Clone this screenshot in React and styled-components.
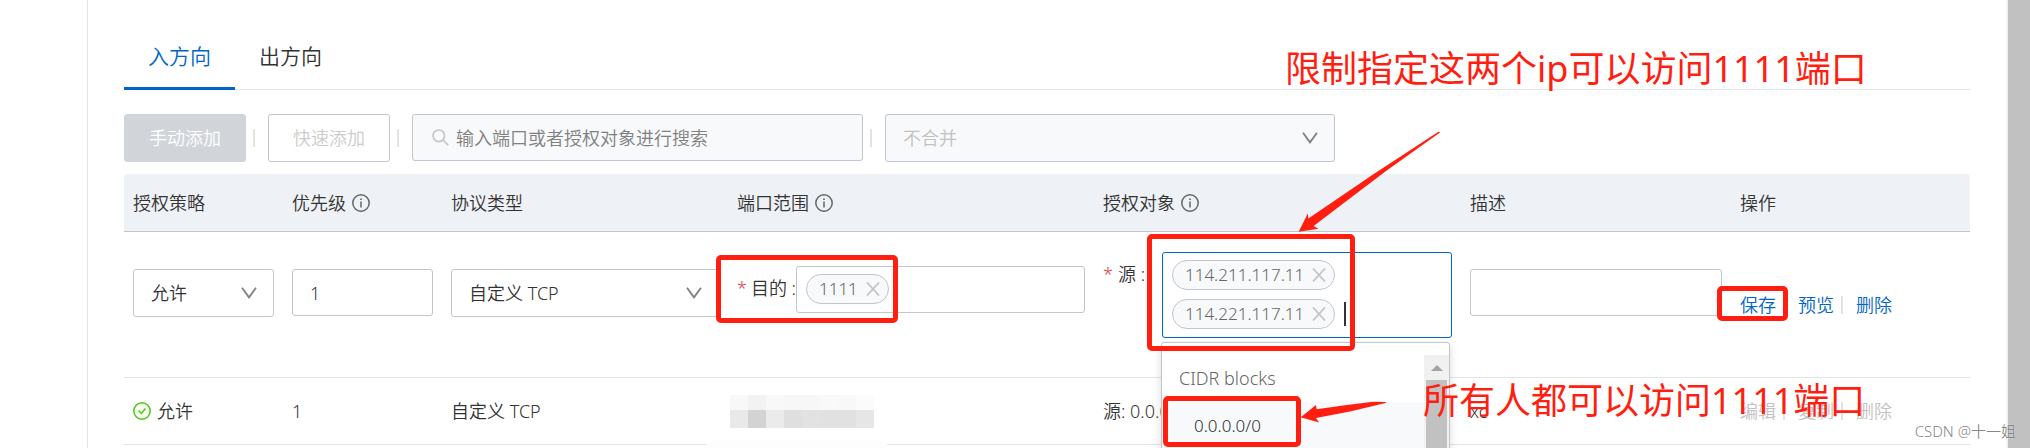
import React, { useState } from "react";
import styled, { createGlobalStyle } from "styled-components";

const columns = [
  { title: "授权策略", width: 159 },
  { title: "优先级", width: 159, info: true },
  { title: "协议类型", width: 286 },
  { title: "端口范围", width: 366, info: true },
  { title: "授权对象", width: 367, info: true },
  { title: "描述", width: 270 },
  { title: "操作", width: 239 },
];

const mosaic = [
  ["#f8f8f8", "#f2f2f2", "#f8f8f8", "#f7f7f7", "#f7f7f7", "#f9f9f9", "#f8f8f8", "#fbfbfb"],
  ["#e9e9e9", "#d3d3d3", "#ebebeb", "#dfdfdf", "#e2e2e2", "#e1e1e1", "#e1e1e1", "#e6e6e6"],
];

const InfoIcon = () => (
  <svg width="18" height="18" viewBox="0 0 18 18" fill="none" stroke="#666" aria-hidden="true">
    <circle cx="9" cy="9" r="8.2" strokeWidth="1.5" />
    <path d="M9 7.4V13.4" strokeWidth="1.5" />
    <path d="M9 4.4V6" strokeWidth="1.7" />
  </svg>
);

const CloseIcon = () => (
  <svg width="14" height="14" viewBox="0 0 14 14" fill="none" stroke="#c4c4c4" strokeWidth="1.8" aria-hidden="true">
    <path d="M1 0.5L13 13.5M13 0.5L1 13.5" />
  </svg>
);

const CheckIcon = () => (
  <svg width="18" height="18" viewBox="0 0 18 18" fill="none" stroke="#52c41a" aria-hidden="true">
    <circle cx="9" cy="9" r="8.2" strokeWidth="1.5" fill="#f6ffed" />
    <path d="M5.6 8.6L8.3 11.4L12.4 6.4" strokeWidth="1.5" />
  </svg>
);

const SearchIcon = () => (
  <svg width="17" height="17" viewBox="0 0 17 17" fill="none" stroke="#c4c6c9" strokeWidth="1.7" aria-hidden="true">
    <circle cx="6.8" cy="6.8" r="5.8" />
    <path d="M11 11L16.2 16.2" />
  </svg>
);

function Dropdown({ label, value, muted, wide }) {
  return (
    <SelectWrapper $wide={wide}>
      <Select aria-label={label} disabled={muted} defaultValue={value}>
        <option>{value}</option>
      </Select>
      <Arrow viewBox="0 0 16 12" aria-hidden="true">
        <path d="M1 0.8L8 10.4L15 0.8" />
      </Arrow>
    </SelectWrapper>
  );
}

function TagField({ id, label, tags, focused, children }) {
  return (
    <Field>
      <FieldLabel htmlFor={id}>
        <Star>*</Star>
        {label} :
      </FieldLabel>
      <TagBox $focused={focused}>
        {tags.map((tag) => (
          <Tag key={tag}>
            {tag}
            <TagClose aria-label={"移除 " + tag}>
              <CloseIcon />
            </TagClose>
          </Tag>
        ))}
        {focused && <Caret />}
        <TagInput id={id} />
        {children}
      </TagBox>
    </Field>
  );
}

function App() {
  const [tab, setTab] = useState("入方向");

  return (
    <Page>
      <GlobalStyle />
      <Side />
      <Main>
        <Tabs role="tablist">
          {["入方向", "出方向"].map((name) => (
            <Tab key={name} role="tab" aria-selected={tab === name} $active={tab === name} onClick={() => setTab(name)}>
              {name}
            </Tab>
          ))}
        </Tabs>

        <Toolbar>
          <Button $filled disabled>
            手动添加
          </Button>
          <Divider />
          <Button disabled>快速添加</Button>
          <Divider />
          <Search>
            <SearchIcon />
            <input type="text" aria-label="搜索" placeholder="输入端口或者授权对象进行搜索" />
          </Search>
          <Divider />
          <Dropdown label="合并" value="不合并" muted wide />
        </Toolbar>

        <Table>
          <colgroup>
            {columns.map((col) => (
              <Col key={col.title} $width={col.width} />
            ))}
          </colgroup>
          <thead>
            <tr>
              {columns.map((col) => (
                <Th key={col.title}>
                  <Inline>
                    {col.title}
                    {col.info && <InfoIcon />}
                  </Inline>
                </Th>
              ))}
            </tr>
          </thead>
          <tbody>
            <EditRow>
              <EditCell>
                <Dropdown label="授权策略" value="允许" />
              </EditCell>
              <EditCell>
                <Input aria-label="优先级" defaultValue="1" />
              </EditCell>
              <EditCell>
                <Dropdown label="协议类型" value="自定义 TCP" />
              </EditCell>
              <EditCell $top={34}>
                <TagField id="port" label="目的" tags={["1111"]} />
              </EditCell>
              <EditCell $top={20}>
                <TagField id="source" label="源" tags={["114.211.117.11", "114.221.117.11"]} focused>
                  <Menu>
                    <MenuList role="listbox" aria-label="源">
                      <MenuGroup role="presentation">CIDR blocks</MenuGroup>
                      <MenuItem role="option" aria-selected="true">
                        0.0.0.0/0
                      </MenuItem>
                    </MenuList>
                    <MenuTrack>
                      <svg width="12" height="6" viewBox="0 0 12 6" aria-hidden="true">
                        <path d="M0 6L6 0L12 6Z" fill="#a3a3a3" />
                      </svg>
                      <MenuThumb />
                    </MenuTrack>
                  </Menu>
                </TagField>
              </EditCell>
              <EditCell>
                <Input aria-label="描述" />
              </EditCell>
              <Td>
                <Actions>
                  <Action>保存</Action>
                  <Divider />
                  <Action>预览</Action>
                  <Divider />
                  <Action>删除</Action>
                </Actions>
              </Td>
            </EditRow>
            <tr>
              <Td>
                <Inline>
                  <CheckIcon />
                  允许
                </Inline>
              </Td>
              <Td>1</Td>
              <Td>自定义 TCP</Td>
              <Td>
                <Mosaic viewBox="0 0 144 33" aria-hidden="true">
                  {mosaic[0].map((fill, i) => (
                    <rect key={i} x={i * 18} y="0" width="18" height="15" fill={fill} />
                  ))}
                  {mosaic[1].map((fill, i) => (
                    <rect key={i} x={i * 18} y="15" width="18" height="18" fill={fill} />
                  ))}
                </Mosaic>
              </Td>
              <Td>源: 0.0.0.0/0</Td>
              <Td>xc</Td>
              <Td>
                <Actions>
                  <Action disabled>编辑</Action>
                  <Divider />
                  <Action disabled>复制</Action>
                  <Divider />
                  <Action disabled>删除</Action>
                </Actions>
              </Td>
            </tr>
          </tbody>
        </Table>
      </Main>
      <Scrollbar />

      <Smudge />
      <Mark $x={716} $y={255} $w={182} $h={68} />
      <Mark $x={1147} $y={234} $w={208} $h={117} />
      <Mark $x={1717} $y={286} $w={71} $h={35} />
      <Mark $x={1163} $y={396} $w={138} $h={51} />
      <Arrows viewBox="0 0 2030 448" aria-hidden="true">
        <path d="M1298.7 231.8L1307.8 213.4L1308.4 218.6L1373 174.5L1438.8 131.6L1440 132.6L1386 171L1313.6 226L1318.4 228.8Z" />
        <path d="M1300.7 417.3L1316 405L1316.6 409.2L1343 405.4L1373 401.8L1386 402L1385.6 403L1350 411.4L1316 418L1319 422.4Z" />
      </Arrows>
      <Note $x={1285} $y={43}>
        限制指定这两个ip可以访问1111端口
      </Note>
      <Note $x={1423} $y={375}>
        所有人都可以访问1111端口
      </Note>
      <Watermark>CSDN @十一姐</Watermark>
    </Page>
  );
}

export default App;

const red = "#ff1e10";
const line = "#e3e4e6";
const border = "#c0c6cc";

const GlobalStyle = createGlobalStyle`
  * {
    box-sizing: border-box;
  }

  body {
    margin: 0;
    background: #fff;
    color: #333;
    font-size: 18px;
    font-weight: 350;
    line-height: 26px;
    font-family: "Noto Sans", "Noto Sans CJK SC", sans-serif;
  }

  button, input, select {
    font: inherit;
    color: inherit;
  }
`;

const Page = styled.div`
  position: relative;
  display: flex;
  height: 100vh;
  overflow: hidden;
`;

const Side = styled.aside`
  flex: none;
  width: 88px;
  border-right: 1px solid ${line};
`;

const Main = styled.main`
  flex: 1;
  min-width: 0;
  padding: 0 36px;
`;

const Scrollbar = styled.div`
  flex: none;
  width: 24px;
  border-left: 2px solid #f1f1f1;
  background: #c1c1c1;
`;

const Tabs = styled.div`
  display: flex;
  padding-top: 25px;
  border-bottom: 1px solid ${line};
`;

const Tab = styled.button`
  height: 65px;
  margin-bottom: -1px;
  padding: 0 24px;
  border: 0;
  border-bottom: 3px solid ${(props) => (props.$active ? "#0064c8" : "transparent")};
  background: none;
  color: ${(props) => (props.$active ? "#0064c8" : "#333")};
  font-size: 21px;
`;

const Toolbar = styled.div`
  display: flex;
  align-items: flex-start;
  margin: 24px 0 12px;
`;

const Divider = styled.span`
  flex: none;
  align-self: center;
  width: 2px;
  height: 18px;
  margin: 0 13px 0 7px;
  background: #e1e2e4;
`;

const Button = styled.button`
  height: 48px;
  padding: 0 24px;
  border: 1px solid ${(props) => (props.$filled ? "#d1d5da" : border)};
  border-radius: 3px;
  background: ${(props) => (props.$filled ? "#d1d5da" : "#fff")};
  color: ${(props) => (props.$filled ? "#fff" : "#ccc")};
`;

const Search = styled.div`
  display: flex;
  align-items: center;
  gap: 7px;
  width: 451px;
  height: 47px;
  padding: 0 19px;
  border: 1px solid ${border};
  border-radius: 3px;
  background: #f7f9fb;

  input {
    flex: 1;
    min-width: 0;
    padding: 0;
    border: 0;
    outline: 0;
    background: none;
  }

  input::placeholder {
    color: #808080;
  }
`;

const SelectWrapper = styled.div`
  position: relative;
  width: ${(props) => (props.$wide ? "450px" : "100%")};
`;

const Select = styled.select`
  display: block;
  width: 100%;
  height: 48px;
  padding: 0 40px 0 17px;
  border: 1px solid ${border};
  border-radius: 3px;
  appearance: none;
  background: #fff;

  &:disabled {
    background: #f7f9fb;
    color: #c1c1c1;
    opacity: 1;
  }
`;

const Arrow = styled.svg`
  position: absolute;
  top: 18px;
  right: 17px;
  width: 16px;
  height: 12px;
  fill: none;
  stroke: #808080;
  stroke-width: 1.8;
  pointer-events: none;
`;

const Input = styled.input`
  display: block;
  width: 100%;
  height: 47px;
  padding: 0 17px;
  border: 1px solid ${border};
  border-radius: 3px;
`;

const Table = styled.table`
  width: 100%;
  table-layout: fixed;
  border-collapse: separate;
  border-spacing: 0;
`;

const Col = styled.col`
  width: ${(props) => props.$width}px;
`;

const Th = styled.th`
  height: 58px;
  padding: 0 9px;
  border-bottom: 1px solid ${border};
  background: #eef1f6;
  font-weight: inherit;
  text-align: left;

  &:first-child {
    border-top-left-radius: 3px;
  }

  &:last-child {
    border-top-right-radius: 3px;
  }
`;

const Td = styled.td`
  height: 67px;
  padding: 0 9px;
  border-bottom: 1px solid ${line};
`;

const EditRow = styled.tr`
  height: 146px;
`;

const EditCell = styled(Td)`
  padding-top: ${(props) => props.$top || 37}px;
  vertical-align: top;
`;

const Inline = styled.div`
  display: flex;
  align-items: center;
  gap: 6px;
`;

const Field = styled.div`
  display: flex;
  align-items: flex-start;
`;

const FieldLabel = styled.label`
  display: flex;
  flex: none;
  align-items: center;
  width: 59px;
  height: 44px;
  white-space: nowrap;
`;

const Star = styled.span`
  width: 15px;
  color: #e0393e;
`;

const TagBox = styled.div`
  position: relative;
  display: flex;
  flex: 1;
  flex-wrap: wrap;
  align-items: center;
  gap: 9px;
  min-width: 0;
  padding: 7px 9px 8px;
  border: 1px solid ${(props) => (props.$focused ? "#0064c8" : border)};
  border-radius: 3px;
`;

const Tag = styled.span`
  display: flex;
  align-items: center;
  gap: 8px;
  height: 30px;
  padding: 0 8px 0 12px;
  border: 1px solid ${border};
  border-radius: 15px;
  background: #f7f9fb;
  color: #666;
  font-size: 17px;
`;

const TagClose = styled.button`
  display: flex;
  padding: 0;
  border: 0;
  background: none;
`;

const TagInput = styled.input`
  flex: 1;
  width: 20px;
  min-width: 0;
  height: 30px;
  padding: 0;
  border: 0;
  outline: 0;
  background: none;
`;

const Caret = styled.span`
  width: 2px;
  height: 24px;
  background: #333;
`;

const Menu = styled.div`
  position: absolute;
  top: 89px;
  left: -2px;
  display: flex;
  width: 289px;
  height: 240px;
  padding-top: 12px;
  border: 1px solid ${border};
  border-radius: 3px;
  background: #fff;
  box-shadow: 0 3px 8px rgba(0, 0, 0, 0.15);
`;

const MenuList = styled.ul`
  flex: 1;
  margin: 0;
  padding: 0;
  list-style: none;
`;

const MenuGroup = styled.li`
  padding: 0 17px;
  color: #666;
  line-height: 47px;
`;

const MenuItem = styled.li`
  padding: 0 32px;
  background: #f7f9fb;
  font-size: 17px;
  line-height: 47px;
`;

const MenuTrack = styled.div`
  display: flex;
  flex-direction: column;
  align-items: center;
  width: 25px;
  padding-top: 10px;
  background: #f1f1f1;
`;

const MenuThumb = styled.div`
  flex: 1;
  width: 21px;
  margin-top: 9px;
  background: #c1c1c1;
`;

const Actions = styled.div`
  display: flex;
  align-items: center;
`;

const Action = styled.button`
  padding: 0;
  border: 0;
  background: none;
  color: #0064c8;
  cursor: pointer;

  &:disabled {
    color: #c1c1c1;
    cursor: default;
  }
`;

const Mosaic = styled.svg`
  display: block;
  width: 144px;
  height: 33px;
  margin-left: -7px;
`;

/* annotations drawn over the page */
const Smudge = styled.div`
  position: absolute;
  left: 707px;
  top: 441px;
  width: 180px;
  height: 7px;
  border-radius: 3px;
  background: #fdfdfd;
`;

const Mark = styled.div`
  position: absolute;
  left: ${(props) => props.$x}px;
  top: ${(props) => props.$y}px;
  width: ${(props) => props.$w}px;
  height: ${(props) => props.$h}px;
  border: 5px solid ${red};
  border-radius: 5px;
  pointer-events: none;
`;

const Arrows = styled.svg`
  position: absolute;
  left: 0;
  top: 0;
  width: 2030px;
  height: 448px;
  fill: ${red};
  pointer-events: none;
`;

const Note = styled.div`
  position: absolute;
  left: ${(props) => props.$x}px;
  top: ${(props) => props.$y}px;
  color: ${red};
  font-size: 36px;
  font-weight: 400;
  line-height: 52px;
  white-space: nowrap;
  pointer-events: none;
`;

const Watermark = styled.div`
  position: absolute;
  right: 14px;
  bottom: 4px;
  color: #888;
  font-size: 15px;
  text-shadow: 0 0 1px #fff;
`;
